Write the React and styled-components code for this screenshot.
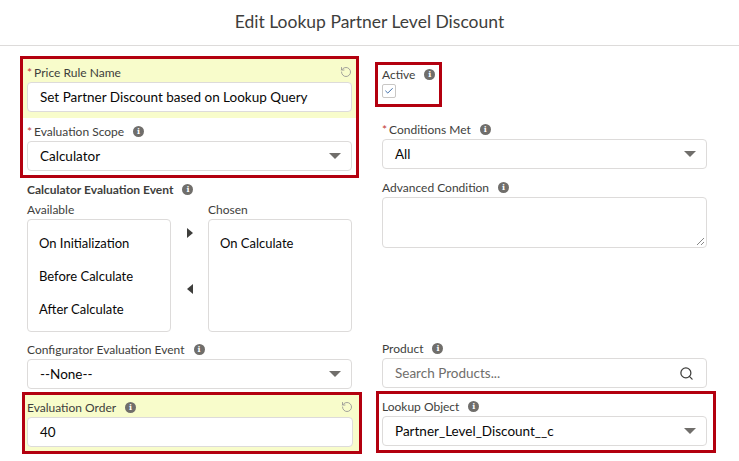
import React from "react";
import styled, { createGlobalStyle } from "styled-components";
import { RotateCcw, Search, Check } from "lucide-react";

const G = createGlobalStyle`
  body { margin: 0; background: #fff; font-family: Lato, "Open Sans", "Liberation Sans", sans-serif; color: #080707; }
  * { box-sizing: border-box; }
`;
const Header = styled.div`
  height: 46px; border-bottom: 1px solid #dddbda; display: flex; align-items: center; justify-content: center;
  font-size: 17.5px; color: #3e3e3c; font-weight: 400; padding-bottom: 2px;
`;
const Body = styled.div`
  display: grid; grid-template-columns: 325px 325px; column-gap: 30px; padding: 10px 0 0 27px;
`;
const Col = styled.div` display: flex; flex-direction: column; `;
const RedBox = styled.div`
  border: 3px solid #b3000f; margin: ${p => p.m || "0"};
`;
const Field = styled.div`
  padding: ${p => p.pad || "5px 4px 6px"};
  background: ${p => (p.hl ? "#f8fccb" : "transparent")};
`;
const Label = styled.div`
  display: flex; align-items: center; gap: 6px; height: 16px; margin-bottom: 2px;
  font-size: 12px; color: #3e3e3c; font-weight: ${p => (p.bold ? 700 : 400)};
  & > .sp { flex: 1; }
`;
const Req = styled.span` color: #c23934; margin-right: -4px; `;
const Info = styled.span`
  width: 11px; height: 11px; border-radius: 50%; background: #706e6b; color: #fff;
  font-size: 8px; font-weight: 700; display: inline-flex; align-items: center; justify-content: center;
  margin-left: 3px; font-family: "DejaVu Serif", serif;
`;
const Input = styled.div`
  height: 30px; border: 1px solid #dddbda; border-radius: 4px; background: #fff;
  display: flex; align-items: center; padding: 0 12px; font-size: 13.5px; color: #080707;
  & > .grow { flex: 1; }
  ${p => p.ph && "color: #706e6b;"}
`;
const Tri = styled.span`
  width: 0; height: 0; border-left: 6px solid transparent; border-right: 6px solid transparent;
  border-top: 6px solid #706e6b; margin-right: -2px;
`;
const TextArea = styled.div`
  height: 51px; border: 1px solid #dddbda; border-radius: 4px; position: relative;
`;
const Grip = styled.span`
  position: absolute; right: 2px; bottom: 2px; width: 7px; height: 7px;
  background: linear-gradient(135deg, transparent 45%, #888 45%, #888 55%, transparent 55%, transparent 75%, #888 75%, #888 85%, transparent 85%);
`;
const DualHead = styled.div`
  display: grid; grid-template-columns: 181px 144px; font-size: 12px; color: #3e3e3c; height: 20px; align-items: center; margin-top: 2px;
`;
const Dual = styled.div` display: grid; grid-template-columns: 144px 37px 144px; height: 110px; `;
const ListBox = styled.div`
  border: 1px solid #dddbda; border-radius: 4px; padding: 6px 0; font-size: 13px;
`;
const Opt = styled.div` height: 33px; display: flex; align-items: center; padding-left: 11px; `;
const Arrows = styled.div`
  display: flex; flex-direction: column; align-items: center; justify-content: flex-start; gap: 46px; padding-top: 9px;
`;
const ArrowR = styled.span` border-top: 5px solid transparent; border-bottom: 5px solid transparent; border-left: 6px solid #3e3e3c; `;
const ArrowL = styled.span` border-top: 5px solid transparent; border-bottom: 5px solid transparent; border-right: 6px solid #3e3e3c; `;
const CheckBox = styled.div`
  width: 14px; height: 14px; border: 1px solid #c9c7c5; border-radius: 2px; display: flex; align-items: center; justify-content: center; color: #1b5297;
`;
const Undo = () => <RotateCcw size={12} color="#9a9895" strokeWidth={1.8} />;

export default function App() {
  return (
    <>
      <G />
      <Header>Edit Lookup Partner Level Discount</Header>
      <Body>
        <Col>
          <RedBox m="0 -7px 0 -7px">
            <Field hl>
              <Label><Req>*</Req>Price Rule Name<span className="sp" /><Undo /></Label>
              <Input>Set Partner Discount based on Lookup Query</Input>
            </Field>
            <Field pad="5px 4px 4px">
              <Label><Req>*</Req>Evaluation Scope<Info>i</Info></Label>
              <Input><span className="grow">Calculator</span><Tri /></Input>
            </Field>
          </RedBox>
          <Field pad="3px 0 0">
            <Label bold>Calculator Evaluation Event<Info>i</Info></Label>
            <DualHead><span>Available</span><span>Chosen</span></DualHead>
            <Dual>
              <ListBox><Opt>On Initialization</Opt><Opt>Before Calculate</Opt><Opt>After Calculate</Opt></ListBox>
              <Arrows><ArrowR /><ArrowL /></Arrows>
              <ListBox><Opt>On Calculate</Opt></ListBox>
            </Dual>
          </Field>
          <Field pad="12px 0 0">
            <Label>Configurator Evaluation Event<Info>i</Info></Label>
            <Input><span className="grow">--None--</span><Tri /></Input>
          </Field>
          <RedBox m="3px -10px 0 -5px">
            <Field hl pad="4px 6px 4px 2px">
              <Label>Evaluation Order<Info>i</Info><span className="sp" /><Undo /></Label>
              <Input>40</Input>
            </Field>
          </RedBox>
        </Col>
        <Col>
          <RedBox m="6px 0 0 -7px" style={{ width: 67 }}>
            <Field pad="1px 4px 6px">
              <Label>Active<Info>i</Info></Label>
              <CheckBox><Check size={10} strokeWidth={2} /></CheckBox>
            </Field>
          </RedBox>
          <Field pad="14px 0 0">
            <Label><Req>*</Req>Conditions Met<Info>i</Info></Label>
            <Input><span className="grow">All</span><Tri /></Input>
          </Field>
          <Field pad="10px 0 0">
            <Label>Advanced Condition<Info>i</Info></Label>
            <TextArea><Grip /></TextArea>
          </Field>
          <Field pad="92px 0 0">
            <Label>Product<Info>i</Info></Label>
            <Input ph><span className="grow">Search Products...</span><Search size={15} color="#3e3e3c" /></Input>
          </Field>
          <RedBox m="3px -9px 0 -6px">
            <Field pad="4px 6px 4px 3px">
              <Label>Lookup Object<Info>i</Info></Label>
              <Input><span className="grow">Partner_Level_Discount__c</span><Tri /></Input>
            </Field>
          </RedBox>
        </Col>
      </Body>
    </>
  );
}
